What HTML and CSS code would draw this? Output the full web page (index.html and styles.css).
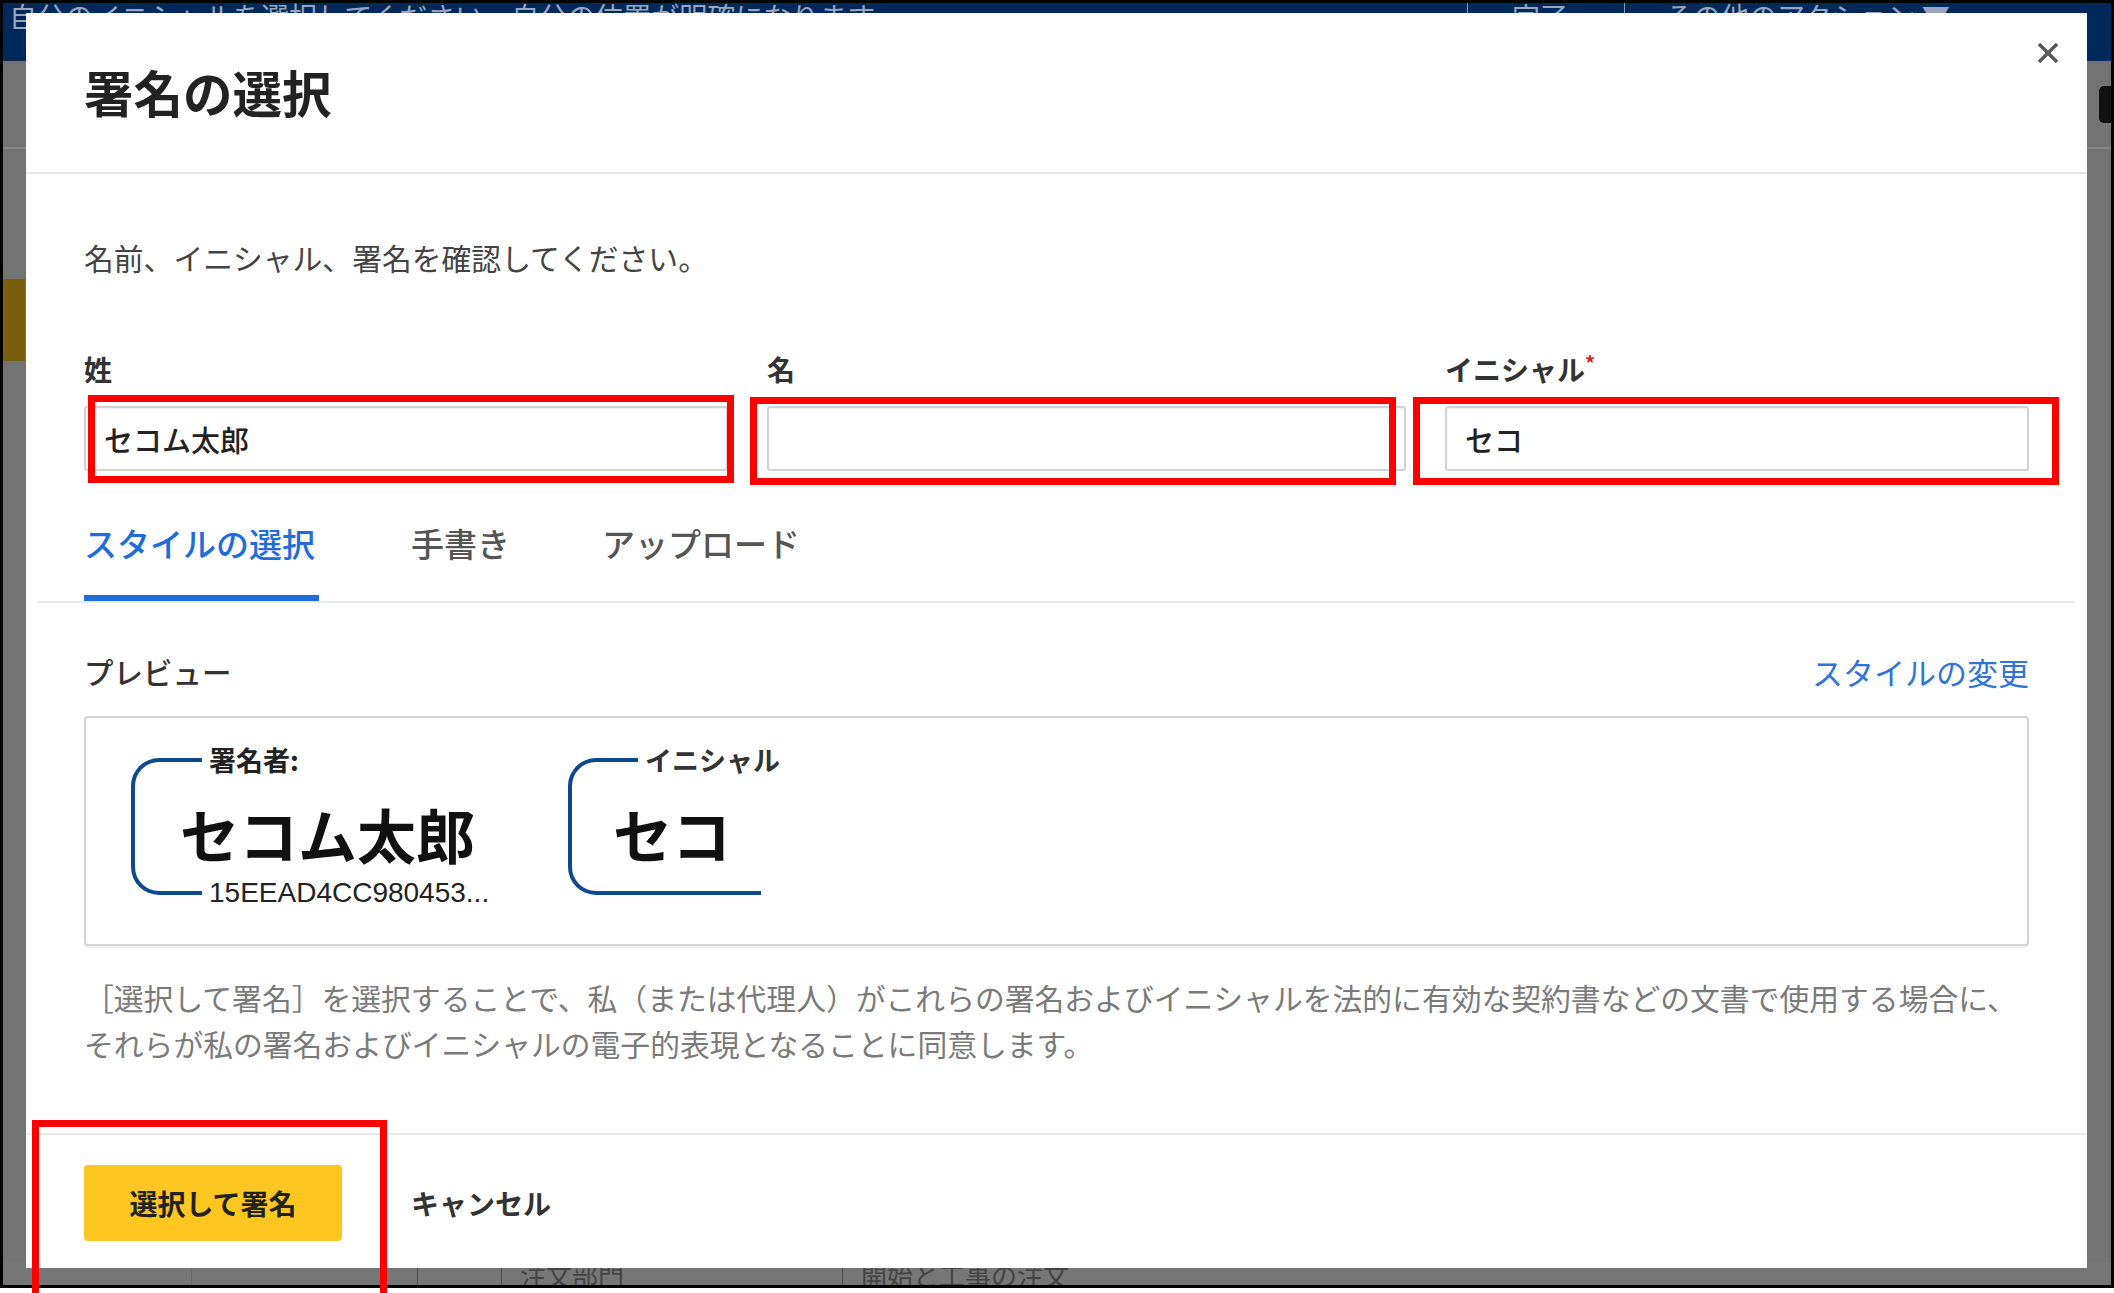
FILE: index.html
```html
<!DOCTYPE html>
<html lang="ja">

<head>
    <meta charset="utf-8">
    <title>署名の選択</title>
    <link rel="stylesheet" href="styles.css">
</head>

<body>
    <div class="screen">
        <!-- page behind the dialog -->
        <div class="page">
            <div class="topbar">
                <span class="topbar-msg">自分のイニシャルを選択してください。自分の位置が明確になります。</span>
                <span class="topbar-sep"></span>
                <span class="topbar-item">完了</span>
                <span class="topbar-sep"></span>
                <span class="topbar-item">その他のアクション ▼</span>
            </div>
            <div class="page-main">
                <div class="page-rule"></div>
                <div class="page-flag"></div>
                <div class="page-pill"></div>
            </div>
            <div class="page-row">
                <span class="cell cell-a"></span>
                <span class="cell cell-b"></span>
                <span class="cell cell-c">注文部門</span>
                <span class="cell cell-d">開始と工事の注文</span>
            </div>
        </div>

        <!-- dialog -->
        <div class="modal">
            <div class="modal-header">
                <h1 class="modal-title">署名の選択</h1>
                <button class="modal-close" aria-label="閉じる">
                    <svg viewBox="0 0 22 22" width="22" height="22">
                        <line x1="2" y1="2" x2="20" y2="20" />
                        <line x1="20" y1="2" x2="2" y2="20" />
                    </svg>
                </button>
            </div>

            <div class="modal-body">
                <p class="intro">名前、イニシャル、署名を確認してください。</p>

                <div class="fields">
                    <div class="field">
                        <label class="field-label">姓</label>
                        <div class="field-input">セコム太郎</div>
                    </div>
                    <div class="field">
                        <label class="field-label">名</label>
                        <div class="field-input"></div>
                    </div>
                    <div class="field">
                        <label class="field-label">イニシャル<span class="req">*</span></label>
                        <div class="field-input">セコ</div>
                    </div>
                </div>

                <div class="tabs">
                    <span class="tab active">スタイルの選択</span>
                    <span class="tab">手書き</span>
                    <span class="tab">アップロード</span>
                </div>

                <div class="preview-head">
                    <span class="preview-title">プレビュー</span>
                    <a class="preview-link">スタイルの変更</a>
                </div>

                <div class="preview-box">
                    <div class="stamp stamp-sig">
                        <span class="stamp-label">署名者:</span>
                        <span class="stamp-name">セコム太郎</span>
                        <span class="stamp-id">15EEAD4CC980453...</span>
                    </div>
                    <div class="stamp stamp-init">
                        <span class="stamp-label">イニシャル</span>
                        <span class="stamp-name">セコ</span>
                    </div>
                </div>

                <p class="legal">［選択して署名］を選択することで、私（または代理人）がこれらの署名およびイニシャルを法的に有効な契約書などの文書で使用する場合に、<br>それらが私の署名およびイニシャルの電子的表現となることに同意します。</p>
            </div>

            <div class="modal-footer">
                <button class="btn-primary">選択して署名</button>
                <button class="btn-link">キャンセル</button>
            </div>
        </div>

        <!-- red annotation frames -->
        <div class="mark mark-1"></div>
        <div class="mark mark-2"></div>
        <div class="mark mark-3"></div>
        <div class="mark mark-4"></div>
    </div>
</body>

</html>
```

FILE: styles.css
```css
html,
body {
    margin: 0;
    padding: 0;
    background: #fff;
}

body {
    width: 2114px;
    height: 1293px;
    overflow: hidden;
    font-family: "Noto Sans CJK JP", "Noto Sans", sans-serif;
}

.screen {
    position: relative;
    width: 2114px;
    height: 1288px;
    border: 3px solid #000;
    box-sizing: border-box;
}

/* ---- background page (dimmed) ---- */
.page {
    display: flex;
    flex-direction: column;
    height: 100%;
    background: #737373;
}

.topbar {
    height: 58px;
    background: #00295b;
    display: flex;
    align-items: flex-start;
    color: #9aa6ba;
    font-size: 28px;
    line-height: 26px;
    overflow: hidden;
}

.topbar-msg {
    padding-left: 6px;
    width: 1458px;
    white-space: nowrap;
    overflow: hidden;
}

.topbar-sep {
    width: 1px;
    height: 26px;
    background: #8a96ab;
}

.topbar-item {
    padding: 0 44px;
    width: 68px;
    white-space: nowrap;
}

.topbar-item:last-child {
    padding-left: 40px;
    width: auto;
}

.page-main {
    flex: 1;
    position: relative;
}

.page-rule {
    height: 2px;
    margin-top: 86px;
    background: #858585;
}

.page-flag {
    position: absolute;
    left: 0;
    top: 218px;
    width: 22px;
    height: 82px;
    background: #7a5e0e;
}

.page-pill {
    position: absolute;
    right: 0;
    top: 25px;
    width: 12px;
    height: 37px;
    background: #111;
    border-radius: 5px 0 0 5px;
}

.page-row {
    height: 22px;
    display: flex;
    font-size: 26px;
    line-height: 24px;
    color: #444;
    background: #767676;
}

.cell {
    border-left: 1px solid #4a4a4a;
    padding-left: 18px;
    white-space: nowrap;
    overflow: hidden;
}

.cell-a {
    width: 207px;
    margin-left: 188px;
    border-left-color: #666;
}

.cell-b {
    width: 65px;
}

.cell-c {
    width: 322px;
}

.cell-d {
    flex: 1;
}

/* ---- dialog ---- */
.modal {
    position: absolute;
    left: 23px;
    top: 10px;
    width: 2061px;
    background: #fff;
    color: #222;
}

.modal-header {
    position: relative;
    height: 161px;
    box-sizing: border-box;
    padding: 49px 58px 0;
    border-bottom: 2px solid #e6e6e6;
}

.modal-title {
    margin: 0;
    font-size: 49.5px;
    line-height: 60px;
    font-weight: 700;
    color: #222;
}

.modal-close {
    position: absolute;
    right: 28px;
    top: 29px;
    width: 22px;
    height: 22px;
    padding: 0;
    border: 0;
    background: none;
}

.modal-close svg {
    display: block;
    stroke: #5a5a5a;
    stroke-width: 3.5;
}

.modal-body {
    padding: 63px 58px 67px;
}

.intro {
    margin: 0;
    font-size: 29.8px;
    line-height: 40px;
    color: #444;
}

.fields {
    display: grid;
    grid-template-columns: 644px 639px 1fr;
    column-gap: 39px;
    margin-top: 72px;
}

.field-label {
    display: block;
    font-size: 28px;
    line-height: 40px;
    font-weight: 600;
    color: #333;
    margin-bottom: 17px;
}

.req {
    color: #d21f1f;
    font-size: 20px;
    vertical-align: top;
    line-height: 28px;
}

.field-input {
    height: 65px;
    box-sizing: border-box;
    border: 2px solid #d2d2d2;
    border-radius: 3px;
    box-shadow: inset 0 1px 2px rgba(0, 0, 0, 0.06);
    padding: 0 18px;
    font-size: 29px;
    line-height: 63px;
    font-weight: 500;
    color: #222;
}

.tabs {
    display: flex;
    gap: 92px;
    margin: 50px -45px 0 -47px;
    padding: 0 45px 0 47px;
    border-bottom: 2px solid #ebebeb;
}

.tab {
    font-size: 33px;
    line-height: 44px;
    padding-bottom: 30px;
    border-bottom: 6px solid transparent;
    color: #555;
    font-weight: 500;
}

.tab.active {
    color: #1f6ddb;
    border-bottom-color: #1f6ddb;
    padding-right: 4px;
}

.preview-head {
    display: flex;
    justify-content: space-between;
    align-items: center;
    margin-top: 48px;
    height: 40px;
}

.preview-title {
    font-size: 29.5px;
    color: #333;
    font-weight: 500;
}

.preview-link {
    font-size: 31px;
    color: #2f74d8;
}

.preview-box {
    margin-top: 25px;
    height: 230px;
    box-sizing: border-box;
    border: 2px solid #d3d3d3;
    border-radius: 4px;
    box-shadow: 0 2px 2px rgba(0, 0, 0, 0.08);
    padding: 40px 0 0 45px;
    display: flex;
    gap: 93px;
}

/* signature stamp with bracket */
.stamp {
    position: relative;
    height: 137px;
    display: flex;
    align-items: center;
    padding-top: 14px;
    box-sizing: border-box;
}

.stamp::before {
    content: "";
    position: absolute;
    left: 0;
    top: 0;
    bottom: 0;
    width: 71px;
    border: 4px solid #0c4a8d;
    border-right: 0;
    border-radius: 28px 0 0 28px;
    box-sizing: border-box;
}

.stamp-init::before {
    width: 193px;
}

.stamp-sig {
    padding-left: 49px;
}

.stamp-init {
    padding-left: 45px;
    width: 193px;
}

.stamp-label {
    position: absolute;
    left: 71px;
    top: -14px;
    padding-left: 7px;
    background: #fff;
    font-size: 27px;
    line-height: 32px;
    font-weight: 700;
    color: #222;
    white-space: nowrap;
}

.stamp-init .stamp-label {
    left: 70px;
    font-weight: 600;
    color: #333;
}

.stamp-name {
    position: relative;
    font-size: 59px;
    line-height: 70px;
    font-weight: 700;
    color: #111;
}

.stamp-id {
    position: absolute;
    left: 71px;
    top: 119px;
    padding-left: 7px;
    background: #fff;
    font-family: "Liberation Sans", Arial, sans-serif;
    font-size: 28px;
    line-height: 32px;
    color: #222;
    white-space: nowrap;
}

.legal {
    margin: 28px 0 0;
    font-size: 29.8px;
    line-height: 46px;
    color: #7a7a7a;
    white-space: nowrap;
}

.modal-footer {
    border-top: 2px solid #ebebeb;
    padding: 30px 58px 27px;
    display: flex;
    align-items: center;
    gap: 69px;
}

.btn-primary {
    height: 76px;
    width: 258px;
    border: 0;
    border-radius: 4px;
    background: #fec621;
    font-family: inherit;
    font-size: 28px;
    font-weight: 600;
    color: #222;
}

.btn-link {
    border: 0;
    background: none;
    padding: 0;
    font-family: inherit;
    font-size: 28px;
    font-weight: 600;
    color: #333;
}

/* ---- red annotation frames ---- */
.mark {
    position: absolute;
    border: 7px solid #ff0000;
    box-sizing: border-box;
}

.mark-1 {
    left: 85px;
    top: 392px;
    width: 646px;
    height: 88px;
}

.mark-2 {
    left: 747px;
    top: 394px;
    width: 646px;
    height: 88px;
}

.mark-3 {
    left: 1410px;
    top: 394px;
    width: 646px;
    height: 88px;
}

.mark-4 {
    left: 29px;
    top: 1117px;
    width: 355px;
    height: 180px;
}
```
